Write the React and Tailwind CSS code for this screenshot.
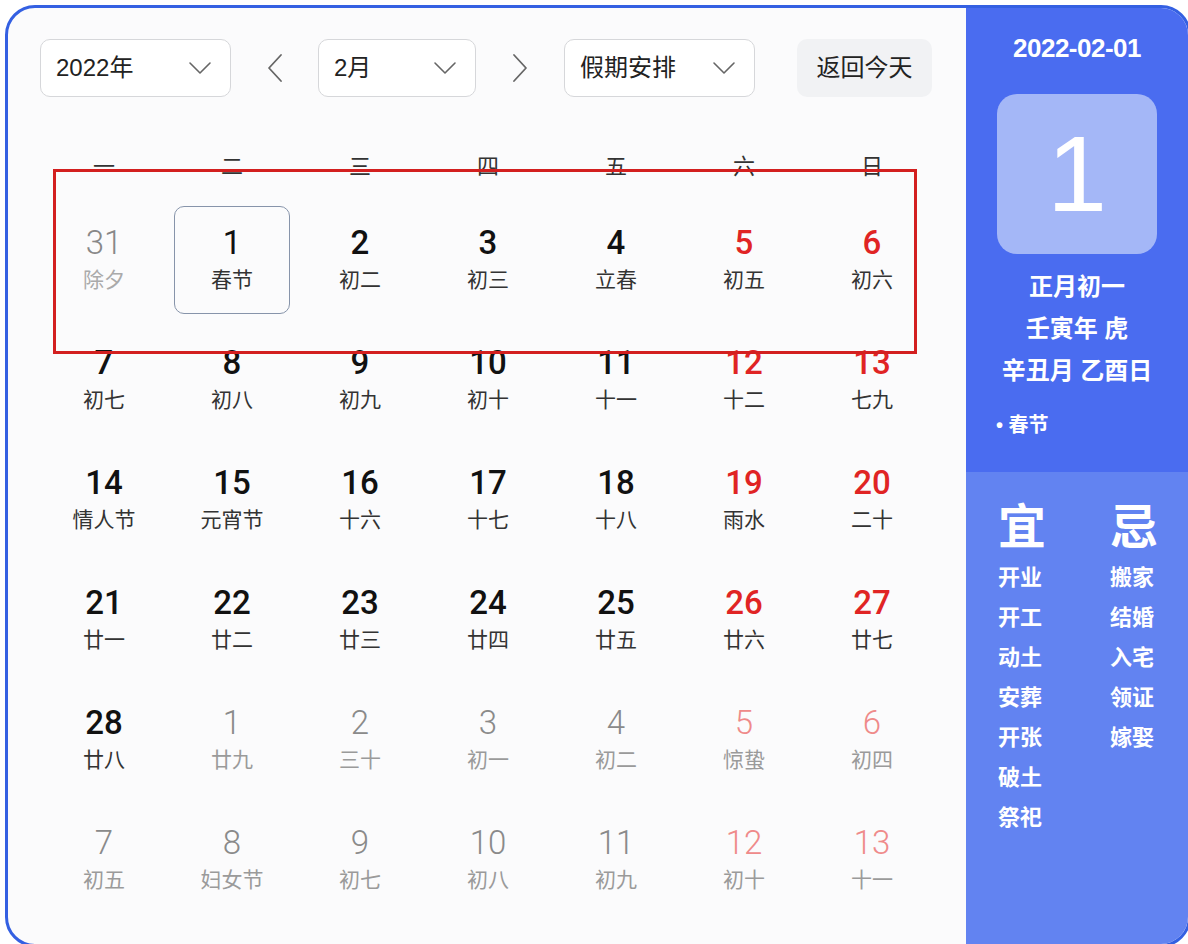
import React from "react";

const FONT = { fontFamily: '"Liberation Sans","Noto Sans CJK SC",sans-serif' };
const NUMFONT = { fontFamily: 'Roboto,"Liberation Sans",sans-serif' };

const rows = [
  [["31", "除夕", "p"], ["1", "春节", "sel"], ["2", "初二"], ["3", "初三"], ["4", "立春"], ["5", "初五", "w"], ["6", "初六", "w"]],
  [["7", "初七"], ["8", "初八"], ["9", "初九"], ["10", "初十"], ["11", "十一"], ["12", "十二", "w"], ["13", "七九", "w"]],
  [["14", "情人节"], ["15", "元宵节"], ["16", "十六"], ["17", "十七"], ["18", "十八"], ["19", "雨水", "w"], ["20", "二十", "w"]],
  [["21", "廿一"], ["22", "廿二"], ["23", "廿三"], ["24", "廿四"], ["25", "廿五"], ["26", "廿六", "w"], ["27", "廿七", "w"]],
  [["28", "廿八"], ["1", "廿九", "n"], ["2", "三十", "n"], ["3", "初一", "n"], ["4", "初二", "n"], ["5", "惊蛰", "nw"], ["6", "初四", "nw"]],
  [["7", "初五", "n"], ["8", "妇女节", "n"], ["9", "初七", "n"], ["10", "初八", "n"], ["11", "初九", "n"], ["12", "初十", "nw"], ["13", "十一", "nw"]],
];

function Chevron() {
  return (
    <svg width="24" height="14" viewBox="0 0 24 14" fill="none">
      <polyline points="2,2 12,12 22,2" stroke="#666" strokeWidth="1.6" strokeLinecap="round" strokeLinejoin="round" />
    </svg>
  );
}

function Select({ w, label }) {
  return (
    <div className={`${w} h-[58px] rounded-[10px] border border-[#d6d7da] bg-white flex items-center justify-between pl-[15px] pr-[18px]`}>
      <span className="text-[24px] text-[#222]">{label}</span>
      <Chevron />
    </div>
  );
}

function Arrow({ dir }) {
  return (
    <svg width="18" height="30" viewBox="0 0 18 30" fill="none">
      {dir === "l" ? (
        <polyline points="15,2 3,15 15,28" stroke="#666" strokeWidth="1.8" strokeLinecap="round" strokeLinejoin="round" />
      ) : (
        <polyline points="3,2 15,15 3,28" stroke="#666" strokeWidth="1.8" strokeLinecap="round" strokeLinejoin="round" />
      )}
    </svg>
  );
}

function Cell({ d }) {
  const [num, lunar, t] = d;
  let numCls = "text-[#111] font-medium";
  let lunCls = "text-[#333]";
  if (t === "w") numCls = "text-[#e02424] font-medium";
  if (t === "p") { numCls = "text-[#888] font-light"; lunCls = "text-[#aaa]"; }
  if (t === "n") { numCls = "text-[#8a8a8a] font-light"; lunCls = "text-[#9a9a9a]"; }
  if (t === "nw") { numCls = "text-[#ef8a8a] font-light"; lunCls = "text-[#9a9a9a]"; }
  if (t === "sel") numCls = "text-[#111] font-normal";
  const box = t === "sel" ? "border-[1.5px] border-[#8794aa]" : "border-[1.5px] border-transparent";
  return (
    <div className="h-[120px] flex">
      <div className={`flex-1 m-[6px] rounded-[10px] ${box} flex flex-col items-center justify-center`}>
        <div className={`h-[40px] leading-[40px] text-[33px] ${numCls}`} style={NUMFONT}>{num}</div>
        <div className={`leading-[34px] text-[21px] ${lunCls}`}>{lunar}</div>
      </div>
    </div>
  );
}

export default function App() {
  const yi = ["开业", "开工", "动土", "安葬", "开张", "破土", "祭祀"];
  const ji = ["搬家", "结婚", "入宅", "领证", "嫁娶"];
  return (
    <div className="w-[1188px] h-[944px] bg-white overflow-hidden" style={FONT}>
      <div className="relative ml-[5px] mt-[5px] w-[1186px] h-[942px] rounded-[30px] border-[3px] border-[#3460e2] bg-[#fbfbfc] overflow-hidden flex">
        <div className="w-[958px] flex flex-col">
          <div className="flex items-center mt-[31px] ml-[32px]">
            <Select w="w-[191px]" label="2022年" />
            <div className="w-[87px] flex justify-center"><Arrow dir="l" /></div>
            <Select w="w-[158px]" label="2月" />
            <div className="w-[88px] flex justify-center"><Arrow dir="r" /></div>
            <Select w="w-[191px]" label="假期安排" />
            <div className="w-[42px]" />
            <div className="w-[135px] h-[58px] rounded-[10px] bg-[#f1f2f4] flex items-center justify-center text-[24px] text-[#222]">返回今天</div>
          </div>
          <div className="ml-[32px] w-[896px] grid grid-cols-7 mt-[47px] h-[44px] items-center">
            {["一", "二", "三", "四", "五", "六", "日"].map((w) => (
              <div key={w} className="text-center text-[22px] text-[#333]">{w}</div>
            ))}
          </div>
          <div className="ml-[32px] w-[896px] grid grid-cols-7 mt-[12px]">
            {rows.flat().map((d, i) => (
              <Cell key={i} d={d} />
            ))}
          </div>
        </div>
        <div className="flex-1 flex flex-col text-white">
          <div className="h-[464px] bg-[#4a6cf0] flex flex-col items-center">
            <div className="mt-[25px] text-[26px] font-semibold leading-[30px] tracking-[-0.5px]">2022-02-01</div>
            <div className="mt-[31px] w-[160px] h-[160px] rounded-[20px] bg-[#a4b7f7] flex items-center justify-center">
              <span className="text-[108px] leading-none font-normal">1</span>
            </div>
            <div className="mt-[12px] flex flex-col items-center text-[24px] font-semibold leading-[42px]">
              <div>正月初一</div>
              <div>壬寅年 虎</div>
              <div>辛丑月 乙酉日</div>
            </div>
            <div className="self-start ml-[30px] mt-[18px] text-[20px] font-semibold">• 春节</div>
          </div>
          <div className="flex-1 bg-[#6283f1] flex pl-[32px] pt-[26px]">
            <div className="w-[112px] flex flex-col">
              <div className="text-[48px] font-semibold leading-[60px]">宜</div>
              {yi.map((t) => (
                <div key={t} className="text-[22px] font-semibold leading-[40px]">{t}</div>
              ))}
            </div>
            <div className="w-[60px] flex flex-col">
              <div className="text-[48px] font-semibold leading-[60px]">忌</div>
              {ji.map((t) => (
                <div key={t} className="text-[22px] font-semibold leading-[40px]">{t}</div>
              ))}
            </div>
          </div>
        </div>
        <div className="absolute left-[45px] top-[161px] w-[864px] h-[185px] border-[3px] border-[#d31f1f] pointer-events-none" />
      </div>
    </div>
  );
}
